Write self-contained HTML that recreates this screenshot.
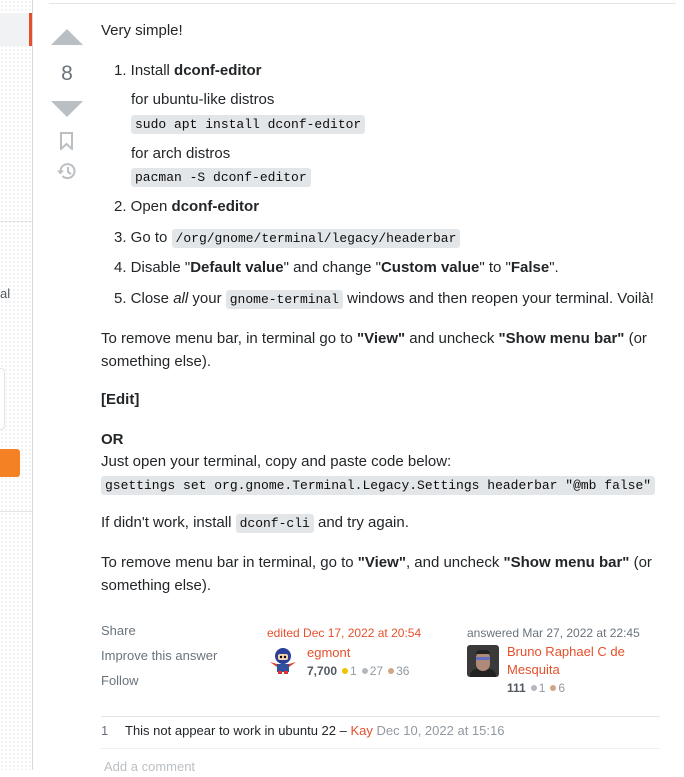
<!DOCTYPE html>
<html><head><style>
body{margin:0;width:684px;height:770px;overflow:hidden;background:#fff;font-family:"Liberation Sans",sans-serif;color:#232629;font-size:15px;position:relative}
.a{position:absolute;white-space:nowrap;line-height:20px}
code{font-family:"Liberation Mono",monospace;font-size:13px;background:#e3e6e8;padding:2px 4px;border-radius:3px;color:#0c0d0e}
.side{position:absolute;left:0;top:0;width:32px;height:770px;border-right:1px solid #d6d9dc;background-image:radial-gradient(#d0d4d8 0.7px,transparent 0.8px);background-size:4px 4px}
.g{color:#6a737c;font-size:13px}
.d{display:inline-block;width:6px;height:6px;border-radius:3px;margin:0 2px 1px 5px;vertical-align:middle}
</style></head><body>
<div class="side"></div>
<div style="position:absolute;left:0;top:13px;width:29px;height:33px;background:#f1f2f3;border-right:3px solid #e4502b"></div>
<div style="position:absolute;left:0;top:221px;width:32px;height:1px;background:#e3e6e8"></div>
<div class="a" style="left:0;top:284px;font-size:13px;color:#525960">al</div>
<div style="position:absolute;left:-10px;top:368px;width:13px;height:60px;border:1px solid #e3e6e8;border-radius:4px;background:#fff"></div>
<div style="position:absolute;left:0;top:449px;width:20px;height:28px;background:#f48225;border-radius:0 3px 3px 0"></div>
<div style="position:absolute;left:0;top:511px;width:32px;height:1px;background:#e3e6e8"></div>
<div style="position:absolute;left:49px;top:3px;width:627px;height:1px;background:#e3e6e8"></div>
<svg style="position:absolute;left:50px;top:28px" width="34" height="90"><path d="M1 17L17 1L33 17Z" fill="#babfc4"/><path d="M1 73L33 73L17 89Z" fill="#babfc4"/></svg>
<div class="a" style="left:50px;top:62px;width:34px;text-align:center;font-size:21px;color:#6a737c;line-height:24px">8</div>
<svg style="position:absolute;left:59px;top:132px" width="16" height="18"><path d="M2 1H13V17L7.5 12L2 17Z" fill="none" stroke="#babfc4" stroke-width="2"/></svg>
<svg style="position:absolute;left:57px;top:162px" width="20" height="20"><path d="M3.5 9a7 7 0 1 1 2 5" fill="none" stroke="#babfc4" stroke-width="2"/><path d="M0 8.5h7L3.5 12.5Z" fill="#babfc4"/><path d="M11 5v5l3 2" fill="none" stroke="#babfc4" stroke-width="2"/></svg>
<div class="a" style="left:101px;top:21px">Very simple!</div>
<div class="a" style="left:114px;top:61px">1. Install <b>dconf-editor</b></div>
<div class="a" style="left:131px;top:90px">for ubuntu-like distros</div>
<div class="a" style="left:131px;top:114px"><code>sudo apt install dconf-editor</code></div>
<div class="a" style="left:131px;top:144px">for arch distros</div>
<div class="a" style="left:131px;top:167px"><code>pacman -S dconf-editor</code></div>
<div class="a" style="left:114px;top:197px">2. Open <b>dconf-editor</b></div>
<div class="a" style="left:114px;top:228px">3. Go to <code>/org/gnome/terminal/legacy/headerbar</code></div>
<div class="a" style="left:114px;top:258px">4. Disable "<b>Default value</b>" and change "<b>Custom value</b>" to "<b>False</b>".</div>
<div class="a" style="left:114px;top:289px">5. Close <i>all</i> your <code>gnome-terminal</code> windows and then reopen your terminal. Voilà!</div>
<div class="a" style="left:101px;top:327px;line-height:23px">To remove menu bar, in terminal go to <b>"View"</b> and uncheck <b>"Show menu bar"</b> (or<br>something else).</div>
<div class="a" style="left:101px;top:390px"><b>[Edit]</b></div>
<div class="a" style="left:101px;top:429px;line-height:22px"><b>OR</b><br>Just open your terminal, copy and paste code below:</div>
<div class="a" style="left:101px;top:475px"><code>gsettings set org.gnome.Terminal.Legacy.Settings headerbar "@mb false"</code></div>
<div class="a" style="left:101px;top:513px">If didn't work, install <code>dconf-cli</code> and try again.</div>
<div class="a" style="left:101px;top:551px;line-height:23px">To remove menu bar in terminal, go to <b>"View"</b>, and uncheck <b>"Show menu bar"</b> (or<br>something else).</div>
<div class="a g" style="left:101px;top:621px">Share</div>
<div class="a g" style="left:101px;top:646px">Improve this answer</div>
<div class="a g" style="left:101px;top:671px">Follow</div>
<div class="a" style="left:267px;top:623px;font-size:12px;color:#e4502b">edited Dec 17, 2022 at 20:54</div>
<svg style="position:absolute;left:270px;top:646px" width="28" height="30"><rect x="7" y="18" width="12" height="8" fill="#3050a0"/><ellipse cx="13" cy="10" rx="8" ry="8" fill="#2a3e9a"/><rect x="8" y="8" width="10" height="6" rx="2" fill="#f3d6b0"/><circle cx="11" cy="11" r="1.2" fill="#000"/><circle cx="15" cy="11" r="1.2" fill="#000"/><path d="M0 16L7 18L7 21Z M26 16L19 18L19 21Z" fill="#e04020"/><rect x="8" y="25" width="4" height="3" fill="#d33"/><rect x="14" y="25" width="4" height="3" fill="#d33"/></svg>
<div class="a" style="left:307px;top:643px;font-size:13px;color:#e4502b">egmont</div>
<div class="a" style="left:307px;top:661px;font-size:12px;color:#9199a1"><b style="color:#525960">7,700</b><span class="d" style="background:#f1c300"></span>1<span class="d" style="background:#b4b8bc"></span>27<span class="d" style="background:#d1a684"></span>36</div>
<div class="a" style="left:467px;top:623px;font-size:12px;color:#6a737c">answered Mar 27, 2022 at 22:45</div>
<div style="position:absolute;left:467px;top:645px;width:32px;height:32px;background:#3a3a3a;border-radius:3px;overflow:hidden"><div style="position:absolute;left:3px;top:24px;width:26px;height:14px;border-radius:8px;background:#222"></div><div style="position:absolute;left:9px;top:6px;width:14px;height:20px;border-radius:7px;background:#b08a78"></div><div style="position:absolute;left:9px;top:12px;width:14px;height:3px;background:#6070c0"></div><div style="position:absolute;left:9px;top:5px;width:14px;height:4px;border-radius:4px 4px 0 0;background:#222"></div></div>
<div class="a" style="left:507px;top:643px;font-size:13px;color:#e4502b;line-height:18px">Bruno Raphael C de<br>Mesquita</div>
<div class="a" style="left:507px;top:678px;font-size:12px;color:#9199a1"><b style="color:#525960">111</b><span class="d" style="background:#b4b8bc"></span>1<span class="d" style="background:#d1a684"></span>6</div>
<div style="position:absolute;left:101px;top:716px;width:559px;height:1px;background:#e3e6e8"></div>
<div class="a" style="left:101px;top:721px;font-size:13px;color:#6a737c">1</div>
<div class="a" style="left:125px;top:721px;font-size:13px">This not appear to work in ubuntu 22 – <span style="color:#e4502b">Kay</span> <span style="color:#9199a1">Dec 10, 2022 at 15:16</span></div>
<div style="position:absolute;left:101px;top:748px;width:559px;height:1px;background:#eff0f1"></div>
<div class="a" style="left:104px;top:757px;font-size:13px;color:#bbc0c4">Add a comment</div>
</body></html>
